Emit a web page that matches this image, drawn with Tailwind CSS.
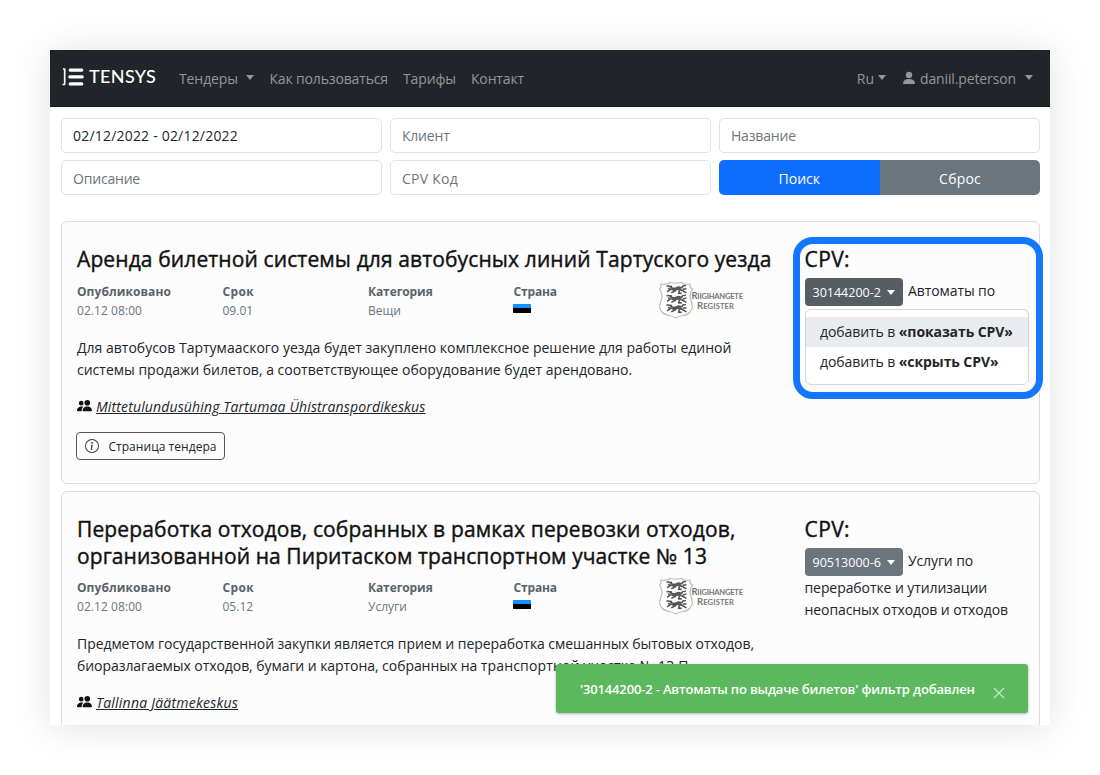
<!DOCTYPE html>
<html lang="ru"><head><meta charset="utf-8"><title>Tensys</title>
<script src="https://cdn.jsdelivr.net/npm/@tailwindcss/browser@4"></script></head>
<body class="bg-white font-['Open_Sans','Noto_Sans',sans-serif] text-[14px] text-[#212529] w-[1100px] h-[775px] overflow-hidden p-[50px] whitespace-nowrap">
<svg class="hidden"><defs>
<symbol id="people" viewBox="0 0 16 16"><path d="M7 14s-1 0-1-1 1-4 5-4 5 3 5 4-1 1-1 1zm4-6a3 3 0 1 0 0-6 3 3 0 0 0 0 6m-5.784 6A2.24 2.24 0 0 1 5 13c0-1.355.68-2.75 1.936-3.72A6.300 6.300 0 0 0 5 9c-4 0-5 3-5 4s1 1 1 1zM4.500 8a2.500 2.500 0 1 0 0-5 2.500 2.500 0 0 0 0 5"/></symbol>
<symbol id="lion" viewBox="0 0 22 9"><path d="M1.500 1.500 3 .8 4.500 1.500 6 1.200 6.500 3 9 3.300 13 2 16 2.600 17 1l3-.6M3 3l2 1.500L2 6.500M6 4l4 1.500L6 7.500M10 4.500l4-.5 3 1.500 3.500 2M14 5l-1 3h3M17 4l3.500-.5M5 2.500l4 1.800 6-1" fill="none" stroke="#555" stroke-width="1.500" stroke-linejoin="round"/></symbol>
<symbol id="register" viewBox="0 0 86 38"><path d="M2 3Q8 4 11 1.500q5 1.500 11 0 4 2.500 9 1.500-.5 3.500 2.500 5-4.500 6.500-1 13 2 5.500-1 9.500-3 3.500-8 4-4 .5-6.500 2.500-2.500-2-6.500-2.500-5-.5-8-4-3-4-1-9.500 3.500-6.500-1-13Q2.500 6.500 2 3Z" fill="#fff" stroke="#bbb" stroke-width="1.200"/>
<use href="#lion" x="6" y="4" width="23" height="9.400"/><use href="#lion" x="6" y="13.500" width="23" height="9.400"/><use href="#lion" x="6" y="23" width="23" height="9.400"/>
<g fill="#777" font-family="Lato, sans-serif" font-weight="700"><text x="32.500" y="18" font-size="9.500" textLength="51.500" lengthAdjust="spacing">R<tspan font-size="7.600">IIGIHANGETE</tspan></text><text x="38" y="27.500" font-size="9.500" textLength="37" lengthAdjust="spacing">R<tspan font-size="7.600">EGISTER</tspan></text></g></symbol>
</defs></svg>
<div class="relative w-[1000px] h-[675px] bg-white shadow-[0_2px_36px_rgba(0,0,0,0.12)]"><div class="h-[675px] overflow-hidden">
<nav class="flex items-center h-[57px] bg-[#212529] border-b border-[#15181b] pl-[12px] pr-[17px] text-[#949698]">
<div class="flex items-center w-[117px] text-white"><svg class="w-[23px] h-[20px] mr-[4px] -mt-[3px]" viewBox="0 0 23 20"><path d="M2.700 1.500v16M1 2h1.700M.5 17.500h2.500" stroke="#fff" stroke-width="1.700" fill="none"/><path d="M8.200 3.100h11.600M7.800 9.900h12.400M8.200 16.900h11.600" stroke="#fff" stroke-width="3.200" stroke-linecap="round"/></svg><span class="font-[Lato,sans-serif] text-[18px] -mt-[3px] font-medium tracking-[0.350px]">TENSYS</span></div>
<span class="-tracking-[0.100px]">Тендеры</span><i class="ml-[8px] mr-[15.500px] -mt-[2px] border-x-[4.500px] border-t-[5px] border-x-transparent"></i>
<span class="mr-[15px] -tracking-[0.150px]">Как пользоваться</span><span class="mr-[15px] -tracking-[0.121px]">Тарифы</span><span class="-tracking-[0.144px]">Контакт</span>
<span class="ml-auto">Ru</span><i class="ml-[4px] mr-[16px] -mt-[2px] border-x-[4.500px] border-t-[5px] border-x-transparent"></i>
<svg class="w-[14px] h-[14px] mr-[4px] fill-current" viewBox="0 0 14 14"><circle cx="7" cy="4" r="3.200"/><path d="M1 13q0-5 6-5t6 5Z"/></svg><span class="-tracking-[0.126px]">daniil.peterson</span><i class="ml-[9px] -mt-[2px] border-x-[4.500px] border-t-[5px] border-x-transparent"></i>
</nav>
<div class="pl-[11px] pr-[9.600px] pt-[11px]">
<div class="grid grid-cols-3 grid-rows-2 gap-x-[7.500px] gap-y-[7px] text-[#6c757d] h-[77px] [&>div]:rounded-[5px]">
<div class="flex items-center border border-[#dee2e6] px-[11px] text-[#212529]"><span class="tracking-[0.200px]">02/12/2022 - 02/12/2022</span></div>
<div class="flex items-center border border-[#dee2e6] px-[11px]"><span class="-tracking-[0.200px]">Клиент</span></div>
<div class="flex items-center border border-[#dee2e6] px-[11px]"><span class="-tracking-[0.164px]">Название</span></div>
<div class="flex items-center border border-[#dee2e6] px-[11px] pt-[2px]"><span class="-tracking-[0.197px]">Описание</span></div>
<div class="flex items-center border border-[#dee2e6] px-[11px] pt-[2px]"><span class="tracking-[0.253px]">CPV Код</span></div>
<div class="flex items-center overflow-hidden text-white"><div class="flex-1 h-full flex items-center justify-center bg-[#0d6efd] pt-[2px]">Поиск</div><div class="flex-1 h-full flex items-center justify-center bg-[#6c757d] pt-[2px] tracking-[0.200px]">Сброс</div></div>
</div>
<section class="mt-[26px] h-[263px] flex border border-[#dcdddd] rounded-[6px] bg-[#fcfcfc] pl-[15px] pt-[24px]">
<div class="w-[727.500px] shrink-0">
<h2 class="text-[21px] leading-[27px] text-[#111] [-webkit-text-stroke:0.400px_#111] tracking-[0.118px]">Аренда билетной системы для автобусных линий Тартуского уезда</h2>
<div class="grid grid-cols-5 mt-[9px] text-[12px] leading-[19px] text-[#6c757d] h-[38px] [&_b]:text-[#59636c]">
<div><b class="tracking-[0.070px]">Опубликовано</b><br><span class="tracking-[0.060px]">02.12 08:00</span></div><div><b class="tracking-[0.400px]">Срок</b><br>09.01</div><div><b class="-tracking-[0.100px]">Категория</b><br>Вещи</div><div><b class="-tracking-[0.150px]">Страна</b><div class="w-[18px] h-[9px] mt-[3px] -ml-[0.500px] bg-linear-to-b from-[#1990ff] from-48% to-black to-48%"></div></div><div><svg class="w-[86px] h-[38px] -mt-[1px]"><use href="#register"/></svg></div></div>
<p class="mt-[17px] leading-[22px]">Для автобусов Тартумааского уезда будет закуплено комплексное решение для работы единой<br>системы продажи билетов, а соответствующее оборудование будет арендовано.</p>
<div class="mt-[14px] h-[22px] flex items-center"><svg class="w-[15px] h-[15px] mr-[4px] -mt-[1px] fill-[#111]"><use href="#people"/></svg><span class="italic underline tracking-[0.143px]">Mittetulundusühing Tartumaa Ühistranspordikeskus</span></div>
<div class="mt-[15px] -ml-[0.600px] w-[149px] h-[28px] flex items-center border border-[#55595d] rounded-[4px] pl-[8px] text-[12px]"><svg class="w-[14px] h-[14px] mr-[9px] fill-[#33373b]" viewBox="0 0 16 16"><path d="M8 15A7 7 0 1 1 8 1a7 7 0 0 1 0 14m0 1A8 8 0 1 0 8 0a8 8 0 0 0 0 16"/><path d="m8.930 6.588-2.290.287-.082.380.450.083c.294.070.352.176.288.469l-.738 3.468c-.194.897.105 1.319.808 1.319.545 0 1.178-.252 1.465-.598l.088-.416c-.2.176-.492.246-.686.246-.275 0-.375-.193-.304-.533zM9 4.500a1 1 0 1 1-2 0 1 1 0 0 1 2 0"/></svg><span class="pt-[1px] tracking-[0.050px]">Страница тендера</span></div>
</div>
<div class="relative"><h2 class="text-[21px] leading-[27px] text-[#111] [-webkit-text-stroke:0.400px_#111] tracking-[0.400px]">CPV:</h2>
<div class="flex items-center mt-[5px]"><div class="w-[98.500px] h-[28px] rounded-[4px] bg-[#565e64] text-white flex items-center pl-[8px] pt-[2px] text-[12.500px] mr-[5px]">30144200-2<i class="ml-[6px] -mt-[2px] border-x-[4.500px] border-t-[5px] border-x-transparent"></i></div><span class="-mt-[4px] -tracking-[0.094px]">Автоматы по</span></div>
<div class="absolute left-0 top-[92px] w-[1px] h-[24px] bg-[#6c757d]"></div>
<div class="absolute left-0 top-[63px] w-[224px] h-[76px] pt-[7px] rounded-[6px] border border-[#d5d6d7] bg-white -tracking-[0.080px]"><div class="h-[30px] bg-[#e9ecef] pl-[14.500px] pb-[2px] flex items-center"><span>добавить в <b>«показать CPV»</b></span></div><div class="h-[30px] pl-[14.500px] pb-[2px] flex items-center"><span>добавить в <b>«скрыть CPV»</b></span></div></div>
<div class="absolute -left-[12px] -top-[9px] w-[250px] h-[162px] border-[7px] border-[#1477ff] rounded-[20px]"></div>
</div>
</section>
<section class="mt-[7px] h-[263px] flex border border-[#dcdddd] rounded-[6px] bg-[#fcfcfc] pl-[15px] pt-[24px]">
<div class="w-[727.500px] shrink-0">
<h2 class="text-[21px] leading-[26.500px] text-[#111] [-webkit-text-stroke:0.400px_#111] tracking-[0.137px]">Переработка отходов, собранных в рамках перевозки отходов,<br><span class="tracking-[0.087px]">организованной на Пиритаском транспортном участке № 13</span></h2>
<div class="grid grid-cols-5 mt-[9px] text-[12px] leading-[19px] text-[#6c757d] h-[38px] [&_b]:text-[#59636c]">
<div><b class="tracking-[0.070px]">Опубликовано</b><br><span class="tracking-[0.060px]">02.12 08:00</span></div><div><b class="tracking-[0.400px]">Срок</b><br>05.12</div><div><b class="-tracking-[0.100px]">Категория</b><br>Услуги</div><div><b class="-tracking-[0.150px]">Страна</b><div class="w-[18px] h-[9px] mt-[3px] -ml-[0.500px] bg-linear-to-b from-[#1990ff] from-48% to-black to-48%"></div></div><div><svg class="w-[86px] h-[38px] -mt-[1px]"><use href="#register"/></svg></div></div>
<p class="mt-[17px] leading-[22px] -tracking-[0.062px]">Предметом государственной закупки является прием и переработка смешанных бытовых отходов,<br>биоразлагаемых отходов, бумаги и картона, собранных на <span class="tracking-[0.150px]">транспортной участке № 13 П</span></p>
<div class="mt-[14px] h-[22px] flex items-center"><svg class="w-[15px] h-[15px] mr-[4px] -mt-[1px] fill-[#111]"><use href="#people"/></svg><span class="italic underline tracking-[0.221px]">Tallinna Jäätmekeskus</span></div>
</div>
<div><h2 class="text-[21px] leading-[27px] text-[#111] [-webkit-text-stroke:0.400px_#111] tracking-[0.400px]">CPV:</h2>
<div class="flex items-center mt-[5px]"><div class="w-[98.500px] h-[28px] rounded-[4px] bg-[#6c757d] text-white flex items-center pl-[8px] pt-[2px] text-[12.500px] mr-[5px]">90513000-6<i class="ml-[6px] -mt-[2px] border-x-[4.500px] border-t-[5px] border-x-transparent"></i></div><span class="-mt-[4px] -tracking-[0.117px]">Услуги по</span></div>
<p class="mt-[1px] leading-[22px] -tracking-[0.080px]">переработке и утилизации<br>неопасных отходов и отходов</p></div>
</section></div></div>
<div class="absolute left-[506px] top-[613.500px] w-[472px] h-[49px] rounded-[3px] bg-[#5cb85c] shadow-[0_1px_3px_rgba(0,0,0,0.3)] text-white flex items-center pl-[24px] text-[13px] font-semibold"><span class="pt-[3px] -tracking-[0.160px]">'30144200-2 - Автоматы по выдаче билетов' фильтр добавлен</span><svg class="w-[12px] h-[12px] ml-[18px] mt-[9px]" viewBox="0 0 12 12"><path d="m1 1 10 10M11 1 1 11" stroke="#c5e6c5" stroke-width="1.300"/></svg></div>
</div>
</body></html>
